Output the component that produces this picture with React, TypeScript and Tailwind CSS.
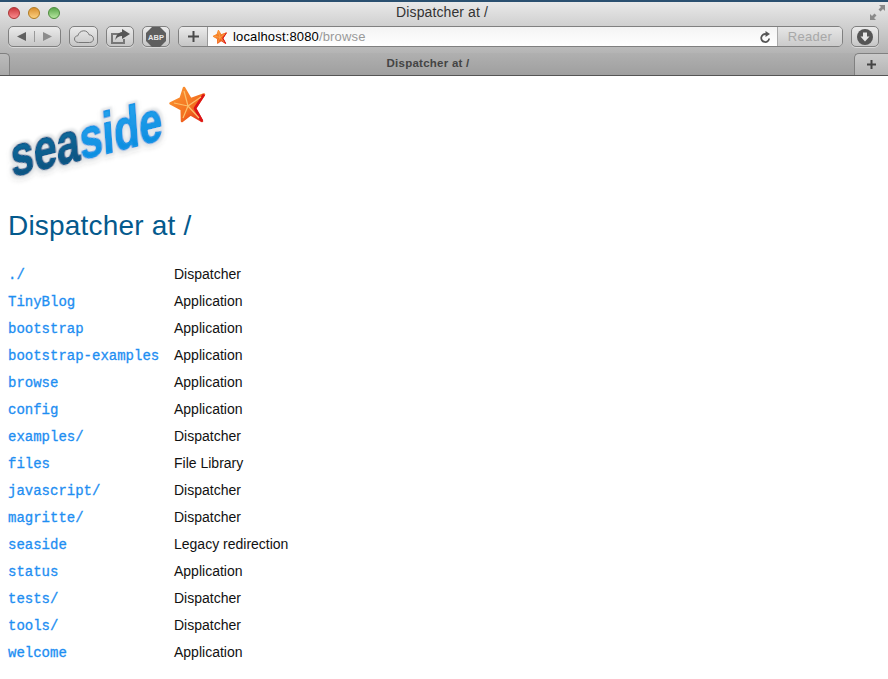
import React from 'react';

const rows: [string, string][] = [
  ['./', 'Dispatcher'],
  ['TinyBlog', 'Application'],
  ['bootstrap', 'Application'],
  ['bootstrap-examples', 'Application'],
  ['browse', 'Application'],
  ['config', 'Application'],
  ['examples/', 'Dispatcher'],
  ['files', 'File Library'],
  ['javascript/', 'Dispatcher'],
  ['magritte/', 'Dispatcher'],
  ['seaside', 'Legacy redirection'],
  ['status', 'Application'],
  ['tests/', 'Dispatcher'],
  ['tools/', 'Dispatcher'],
  ['welcome', 'Application'],
];

const btn =
  'h-[21px] rounded-[5px] border border-[#808080] bg-gradient-to-b from-[#ebebeb] to-[#c6c6c6] shadow-[0_1px_0_rgba(255,255,255,0.45)] flex items-center justify-center';

const Starfish = ({ size, id }: { size: number; id: string }) => (
  <svg width={size} height={size} viewBox="0 0 40 40" className="shrink-0">
    <defs>
      <linearGradient id={id} x1="0" y1="0" x2="1" y2="1">
        <stop offset="0" stopColor="#fb9a35" />
        <stop offset="0.6" stopColor="#f4701f" />
        <stop offset="1" stopColor="#e2261b" />
      </linearGradient>
    </defs>
    <path
      d="M16 3 L22.7 14.3 L36 9.5 L27 23.3 L34 36 L22.7 29.3 L14 36 L13.7 24.3 L2.5 18.3 L12.7 13.3 Z"
      fill={`url(#${id})`}
      stroke={`url(#${id})`}
      strokeWidth="2.5"
      strokeLinejoin="round"
    />
    <path d="M34 36 L27 23.3 L36 9.5" fill="none" stroke="#dc1518" strokeWidth="2.6" strokeLinejoin="round" />
    <path d="M16 6 L20 21 M33 12 L20 21 M31 33 L20 21 M15 33 L20 21 M6 18 L20 21" fill="none" stroke="#fbc06c" strokeWidth="1.2" />
  </svg>
);

const Logo = () => (
  <svg width="204" height="104" viewBox="0 0 204 104" className="block overflow-visible">
    <defs>
      <linearGradient id="dark" x1="0" y1="0" x2="0" y2="1">
        <stop offset="0" stopColor="#1a78ad" />
        <stop offset="1" stopColor="#024a75" />
      </linearGradient>
      <linearGradient id="light" x1="0" y1="0" x2="0" y2="1">
        <stop offset="0" stopColor="#2ba6ee" />
        <stop offset="1" stopColor="#0688dd" />
      </linearGradient>
      <filter id="halo" x="-10%" y="-20%" width="120%" height="150%">
        <feMorphology in="SourceAlpha" operator="dilate" radius="1.6" result="fat" />
        <feGaussianBlur in="fat" stdDeviation="0.8" result="fatSoft" />
        <feFlood floodColor="#e3e6e8" result="c" />
        <feComposite in="c" in2="fatSoft" operator="in" result="ring" />
        <feDropShadow in="ring" dx="0" dy="2" stdDeviation="2" floodColor="#000" floodOpacity="0.12" result="ringShadow" />
        <feMerge>
          <feMergeNode in="ringShadow" />
          <feMergeNode in="SourceGraphic" />
        </feMerge>
      </filter>
    </defs>
    <g transform="translate(4 95) rotate(-14) skewX(-10)" filter="url(#halo)">
      <text
        x="0"
        y="0"
        fontFamily="'Liberation Sans', sans-serif"
        fontWeight="700"
        fontSize="56"
        textLength="156"
        lengthAdjust="spacingAndGlyphs"
        strokeWidth="1.8"
        strokeLinejoin="round"
      >
        <tspan fill="url(#dark)" stroke="#0a5c8e">sea</tspan>
        <tspan fill="url(#light)" stroke="#1796e6">side</tspan>
      </text>
    </g>
    <g transform="translate(160 3)">
      <Starfish size={40} id="bigStar" />
    </g>
  </svg>
);

const Cloud = () => (
  <svg width="20" height="13" viewBox="0 0 20 13" fill="none" stroke="#777" strokeWidth="1">
    <path d="M4.5 12.5 C2 12.5 .5 10.8 .5 9 C.5 7 2 5.8 3.8 5.8 C4.5 3 6.8 .8 9.8 .8 C12.5 .8 14.3 2.5 15 4.8 C17.5 4.8 19.5 6.6 19.5 8.8 C19.5 11 17.8 12.5 15.5 12.5 Z" />
  </svg>
);

const Share = () => (
  <svg width="20" height="15" viewBox="0 0 20 15">
    <path d="M1 4 H9 V6 H3 V13 H13 V10 H15 V15 H1 Z" fill="#777" />
    <path d="M12 0 L20 5 L12 10 V7 C9 7 7 8 5.5 11 C5.5 7 8 3.5 12 3 Z" fill="#555" />
  </svg>
);

const Abp = () => (
  <svg width="20" height="20" viewBox="0 0 20 20">
    <path d="M6 0 H14 L20 6 V14 L14 20 H6 L0 14 V6 Z" fill="#5f5f5f" />
    <text x="10" y="13" textAnchor="middle" fontFamily="'Liberation Sans', sans-serif" fontWeight="700" fontSize="7.5" fill="#e8e8e8">
      ABP
    </text>
  </svg>
);

const Download = () => (
  <svg width="16" height="16" viewBox="0 0 16 16">
    <circle cx="8" cy="8" r="8" fill="#555" />
    <path d="M6 3.5 H10 V7.5 H12.5 L8 12.5 L3.5 7.5 H6 Z" fill="#e6e6e6" />
  </svg>
);

const Reload = () => (
  <svg width="11" height="12" viewBox="0 0 11 12" fill="none">
    <path d="M9.2 7.5 A4 4 0 1 1 6 3.1" stroke="#555" strokeWidth="1.8" />
    <path d="M5.5 0 L10 3 L5.5 6 Z" fill="#555" />
  </svg>
);

export default function App() {
  return (
    <div className="w-[888px] h-[679px] overflow-hidden bg-white font-['Liberation_Sans',sans-serif]">
      {/* window chrome */}
      <div className="h-[76px] flex flex-col border-t-2 border-[#2a5070]">
        <div className="h-[51px] shrink-0 flex flex-col bg-gradient-to-b from-[#e9e9e9] to-[#b4b4b4]">
          <div className="h-[21px] flex items-center pl-[8px] relative">
            <div className="flex gap-[8px]">
              <span className="w-[12px] h-[12px] rounded-full border border-[#a33] bg-gradient-to-b from-[#c9353c] to-[#fb8a8e]" />
              <span className="w-[12px] h-[12px] rounded-full border border-[#b07a20] bg-gradient-to-b from-[#d98f2a] to-[#fcd07f]" />
              <span className="w-[12px] h-[12px] rounded-full border border-[#4c8a3c] bg-gradient-to-b from-[#5aa64a] to-[#b5e6a0]" />
            </div>
            <span className="absolute left-0 right-0 text-center text-[14px] tracking-[0.1px] text-[#333] translate-x-[-2px]">Dispatcher at /</span>
            <svg className="absolute right-[3px] top-[3px]" width="15" height="15" viewBox="0 0 15 15" fill="#8a8a8a">
              <path d="M9 0 H15 V6 L13 4 L10.5 6.5 L8.5 4.5 L11 2 Z M0 15 V9 L2 11 L4.5 8.5 L6.5 10.5 L4 13 L6 15 Z" />
            </svg>
          </div>
          <div className="flex items-start pt-[3px] pl-[8px] pr-[9px]">
            <div className={`${btn} w-[53px] mr-[8px]`}>
              <svg width="36" height="11" viewBox="0 0 36 11">
                <path d="M0 5.5 L9 1 V10 Z" fill="#606060" />
                <path d="M17.5 0 V11" stroke="#999" strokeWidth="1" />
                <path d="M35 5.5 L26 1 V10 Z" fill="#8c8c8c" />
              </svg>
            </div>
            <div className={`${btn} w-[29px] mr-[8px]`}>
              <Cloud />
            </div>
            <div className={`${btn} w-[28px] mr-[8px]`}>
              <Share />
            </div>
            <div className={`${btn} w-[28px] mr-[8px]`}>
              <Abp />
            </div>
            <div className="h-[21px] flex w-[665px] rounded-[5px] border border-[#808080] overflow-hidden mr-[8px]">
              <div className="w-[29px] shrink-0 border-r border-[#999] bg-gradient-to-b from-[#ebebeb] to-[#c6c6c6] flex items-center justify-center">
                <svg width="11" height="11" viewBox="0 0 11 11">
                  <path d="M4.5 0 H6.5 V4.5 H11 V6.5 H6.5 V11 H4.5 V6.5 H0 V4.5 H4.5 Z" fill="#4a4a4a" />
                </svg>
              </div>
              <div className="flex-1 flex items-center bg-gradient-to-b from-[#f4f4f4] to-white pl-[4px] pr-[6px]">
                <Starfish size={16} id="favStar" />
                <span className="ml-[5px] text-[13px] tracking-[0.15px] text-black">localhost:8080</span>
                <span className="text-[13px] tracking-[0.15px] text-[#999]">/browse</span>
                <span className="ml-auto">
                  <Reload />
                </span>
              </div>
              <div className="w-[65px] shrink-0 border-l border-[#aaa] bg-gradient-to-b from-[#e6e6e6] to-[#cbcbcb] flex items-center justify-center text-[13px] tracking-[0.3px] text-[#a8a8a8]">
                Reader
              </div>
            </div>
            <div className={`${btn} w-[28px]`}>
              <Download />
            </div>
          </div>
        </div>
        {/* tab strip */}
        <div className="flex-1 flex bg-gradient-to-b from-[#b0b0b0] to-[#9f9f9f] border-b border-[#555]">
          <div className="w-[10px] rounded-tr-[5px] border-r border-t border-[#808080] bg-gradient-to-b from-[#bcbcbc] to-[#a8a8a8]" />
          <div className="flex-1 flex items-center justify-center text-[11.5px] tracking-[0.25px] font-bold text-[#444] pr-[8px]">Dispatcher at /</div>
          <div className="w-[34px] rounded-tl-[5px] border-l border-t border-[#808080] bg-gradient-to-b from-[#cbcbcb] to-[#b4b4b4] flex items-center justify-center">
            <svg width="9" height="9" viewBox="0 0 9 9">
              <path d="M3.5 0 H5.5 V3.5 H9 V5.5 H5.5 V9 H3.5 V5.5 H0 V3.5 H3.5 Z" fill="#444" />
            </svg>
          </div>
        </div>
      </div>

      {/* page */}
      <div className="pl-[8px] pt-[6px]">
        <Logo />
        <h1 className="mt-[24px] text-[28px] tracking-[0.2px] leading-[32px] text-[#045a8d]">Dispatcher at /</h1>
        <div className="mt-[19px] grid grid-cols-[166px_1fr] auto-rows-[27px] items-center text-[14px]">
          {rows.map(([name, kind]) => (
            <React.Fragment key={name}>
              <a className="pt-[2px] font-['Liberation_Mono',monospace] [-webkit-text-stroke:0.3px_#1e8ef2] text-[#1e8ef2]">{name}</a>
              <span className="text-[#111]">{kind}</span>
            </React.Fragment>
          ))}
        </div>
      </div>
    </div>
  );
}
